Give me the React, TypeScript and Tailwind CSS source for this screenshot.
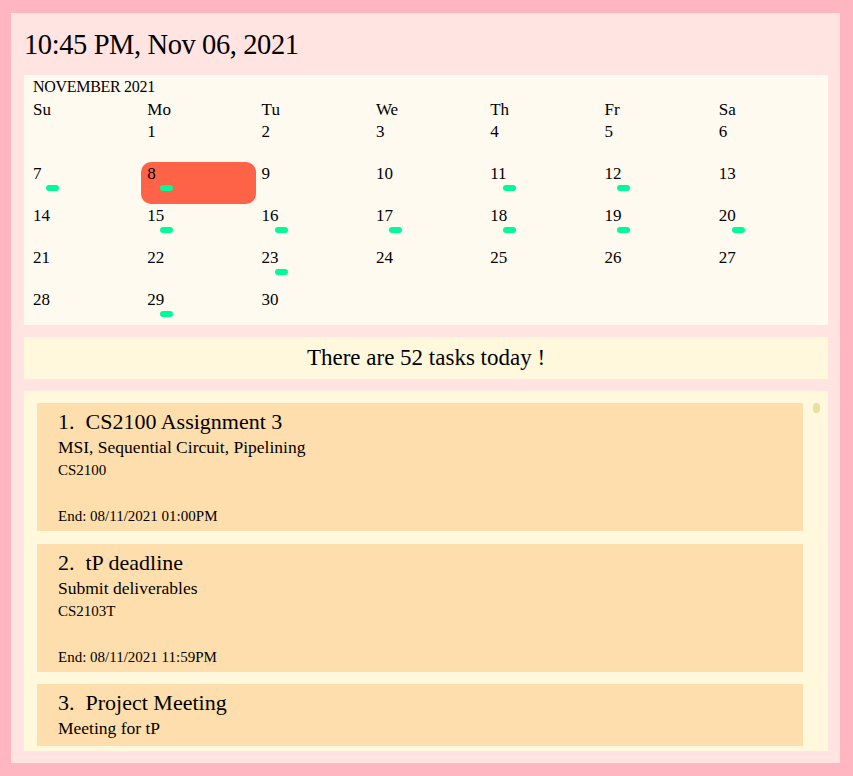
import React from 'react';

const serif = { fontFamily: '"Liberation Serif", "DejaVu Serif", serif' };

const weekDays = ['Su', 'Mo', 'Tu', 'We', 'Th', 'Fr', 'Sa'];

// days with tasks get a green marker
const taskDays = new Set([7, 8, 11, 12, 15, 16, 17, 18, 19, 20, 23, 29]);
const today = 8;

interface Task {
  title: string;
  description: string;
  module?: string;
  end?: string;
}

const tasks: Task[] = [
  {
    title: 'CS2100 Assignment 3',
    description: 'MSI, Sequential Circuit, Pipelining',
    module: 'CS2100',
    end: '08/11/2021 01:00PM',
  },
  {
    title: 'tP deadline',
    description: 'Submit deliverables',
    module: 'CS2103T',
    end: '08/11/2021 11:59PM',
  },
  {
    title: 'Project Meeting',
    description: 'Meeting for tP',
  },
];

const DayCell: React.FC<{ day: number | null }> = ({ day }) => {
  if (day === null) return <div className="h-[42px]" />;
  const isToday = day === today;
  return (
    <div
      className={`relative h-[42px] pl-[6px] pt-[2px] text-[17px] leading-[20px] text-black ${
        isToday ? 'rounded-[10px] bg-[#ff6347]' : ''
      }`}
    >
      {day}
      {taskDays.has(day) && (
        <span className="absolute left-[19px] top-[23px] h-[6px] w-[13px] rounded-full bg-[#00fa9a]" />
      )}
    </div>
  );
};

const Calendar: React.FC = () => {
  // November 2021 starts on a Monday
  const cells: (number | null)[] = [null];
  for (let d = 1; d <= 30; d++) cells.push(d);

  return (
    <div className="h-[250px] overflow-hidden bg-[#fffaf0] pl-[3px] pt-[2px]">
      <div className="pl-[6px] text-[16px] leading-[20px] tracking-[-0.3px]">NOVEMBER 2021</div>
      <div className="grid grid-cols-[repeat(7,114.3px)]">
        {weekDays.map((w) => (
          <div key={w} className="pl-[6px] pt-[3px] text-[17px] leading-[20px]">
            {w}
          </div>
        ))}
      </div>
      <div className="grid grid-cols-[repeat(7,114.3px)]">
        {cells.map((d, i) => (
          <DayCell key={i} day={d} />
        ))}
      </div>
    </div>
  );
};

const TaskCard: React.FC<{ task: Task; index: number }> = ({ task, index }) => (
  <div
    className={`shrink-0 bg-[#ffdead] px-[21px] pt-[5px] text-black ${
      task.end ? 'pb-[3px]' : 'pb-[7px]'
    }`}
  >
    <div className="whitespace-pre text-[22px] leading-[28px]">
      {`${index + 1}.  ${task.title}`}
    </div>
    <div className="text-[17.5px] leading-[22px]">{task.description}</div>
    {task.module && <div className="text-[15px] leading-[24px]">{task.module}</div>}
    {task.end && (
      <>
        <div className="h-[22px]" />
        <div className="text-[15px] leading-[24px]">End: {task.end}</div>
      </>
    )}
  </div>
);

export default function App() {
  return (
    <div style={serif} className="h-[776px] w-[853px] bg-[#ffb6c1] pb-[13px] pl-[11px] pr-[13px] pt-[13px]">
      <div className="flex h-full flex-col gap-[12px] bg-[#ffe4e1] pb-[12px] pl-[13px] pr-[12px] pt-[14px]">
        <div className="text-[28.5px] leading-[36px] tracking-[-0.4px] text-black">
          10:45 PM, Nov 06, 2021
        </div>
        <Calendar />
        <div className="flex h-[42px] items-center justify-center bg-[#fff8dc] text-[23px]">
          There are 52 tasks today !
        </div>
        <div className="flex min-h-0 flex-1 bg-[#fff8dc] pb-[5px] pl-[13px] pt-[12px]">
          <div className="flex min-h-0 flex-1 flex-col gap-[12.5px] overflow-hidden">
            {tasks.map((t, i) => (
              <TaskCard key={t.title} task={t} index={i} />
            ))}
          </div>
          <div className="w-[25px] pl-[10px]">
            <div className="h-[10px] w-[7px] rounded-full bg-[#e8e0a0]" />
          </div>
        </div>
      </div>
    </div>
  );
}
